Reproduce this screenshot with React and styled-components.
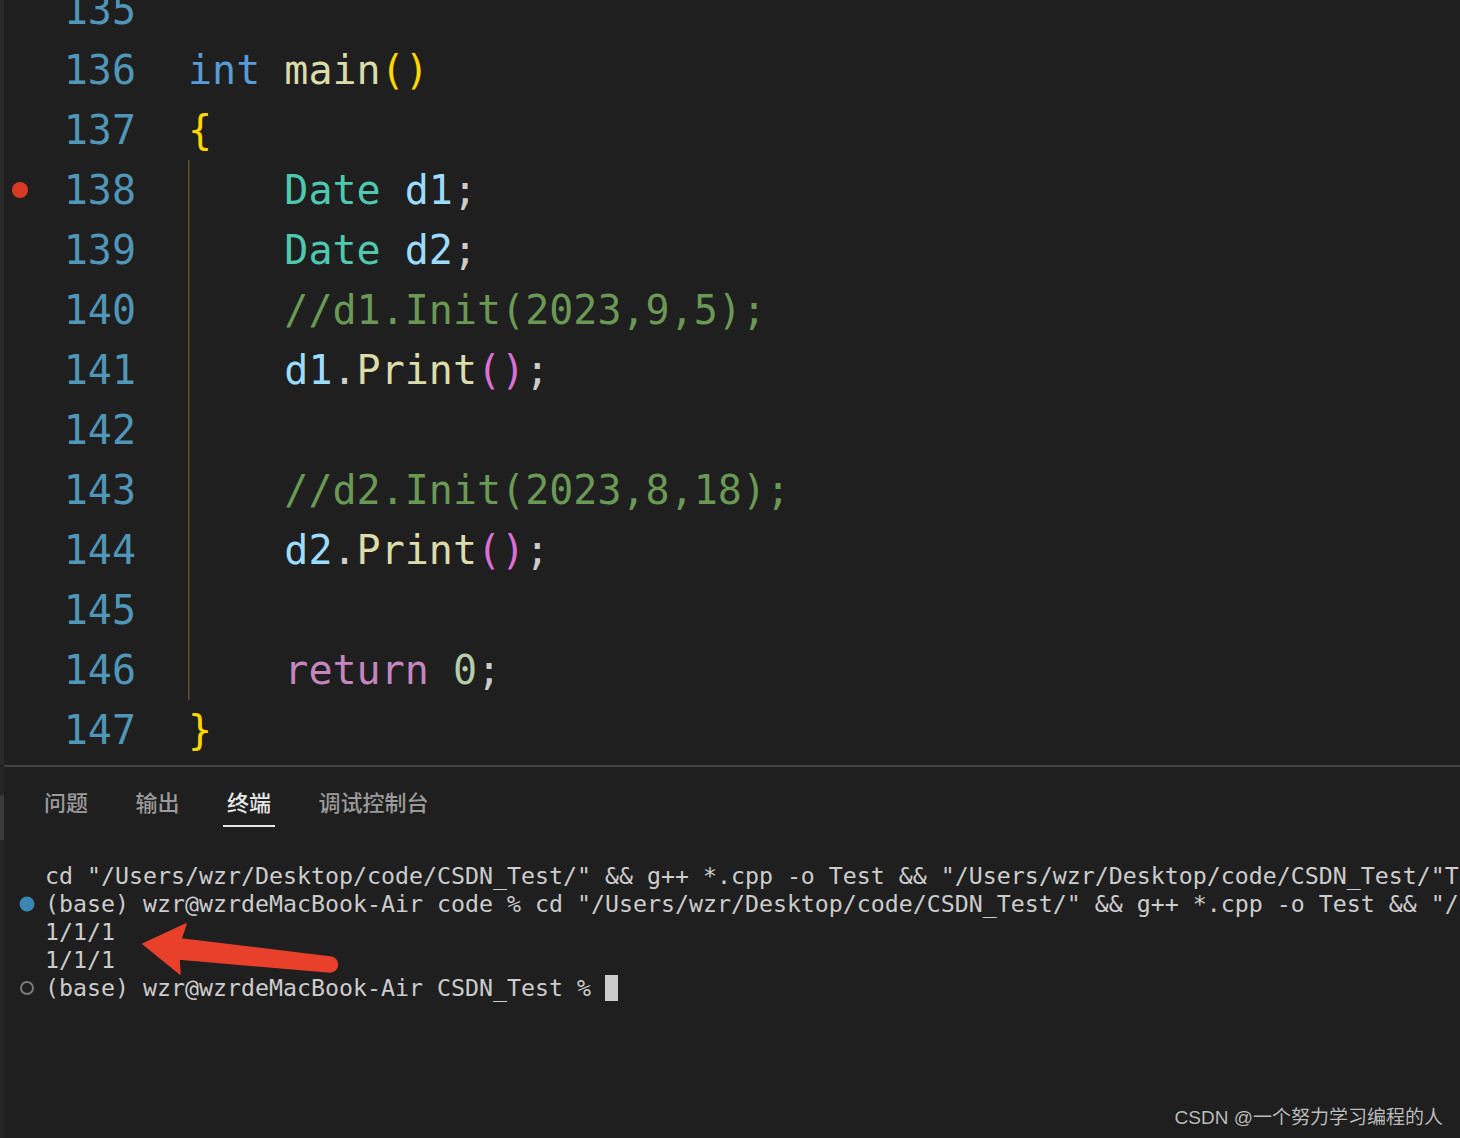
import React from "react";
import styled, { createGlobalStyle } from "styled-components";

const Global = createGlobalStyle`
  html, body { margin: 0; padding: 0; background: #1f1f1f; }
  body { width: 1460px; height: 1138px; overflow: hidden; }
`;

const MONO = `"DejaVu Sans Mono", "Liberation Mono", monospace`;
const CJK = `"Noto Sans CJK SC", "Noto Sans", sans-serif`;

const Window = styled.div`
  position: relative;
  width: 1460px;
  height: 1138px;
  background: #1f1f1f;
  display: flex;
  flex-direction: column;
  overflow: hidden;
`;

const Editor = styled.div`
  height: 765px;
  display: flex;
  overflow: hidden;
`;

const Edge = styled.div`
  width: 4px;
  flex: none;
  display: flex;
  flex-direction: column;
`;

const EdgePart = styled.div`
  height: ${(p) => (p.$h ? `${p.$h}px` : "auto")};
  flex: ${(p) => (p.$h ? "none" : "1")};
  background: ${(p) => p.$c};
`;

const Lines = styled.div`
  flex: 1;
  margin-top: -20px;
  display: flex;
  flex-direction: column;
`;

const Line = styled.div`
  display: flex;
  height: 60px;
  font-family: ${MONO};
  font-size: 40px;
  line-height: 60px;
  white-space: pre;
`;

const Glyph = styled.div`
  width: 32px;
  flex: none;
  display: flex;
  align-items: center;
  justify-content: center;
`;

const Num = styled.div`
  width: 100px;
  flex: none;
  text-align: right;
  color: #4f96b8;
`;

const Code = styled.div`
  margin-left: 52px;
  flex: 1;
  color: #cccccc;
  box-shadow: ${(p) => (p.$guide ? "inset 1.5px 0 0 #5c5230" : "none")};
`;

const T = styled.span`
  color: ${(p) => p.$c};
`;

const C = {
  kw: "#569cd6",
  fn: "#dcdcaa",
  br1: "#ffd700",
  br2: "#da70d6",
  type: "#4ec9b0",
  var: "#9cdcfe",
  punc: "#cccccc",
  com: "#6a9955",
  ctrl: "#c586c0",
  num: "#b5cea8",
};

const code = [
  { n: 135, t: [] },
  { n: 136, t: [["int", C.kw], [" "], ["main", C.fn], ["()", C.br1]] },
  { n: 137, t: [["{", C.br1]] },
  { n: 138, bp: true, g: true, t: [["    "], ["Date", C.type], [" "], ["d1", C.var], [";", C.punc]] },
  { n: 139, g: true, t: [["    "], ["Date", C.type], [" "], ["d2", C.var], [";", C.punc]] },
  { n: 140, g: true, t: [["    "], ["//d1.Init(2023,9,5);", C.com]] },
  { n: 141, g: true, t: [["    "], ["d1", C.var], [".", C.punc], ["Print", C.fn], ["()", C.br2], [";", C.punc]] },
  { n: 142, g: true, t: [] },
  { n: 143, g: true, t: [["    "], ["//d2.Init(2023,8,18);", C.com]] },
  { n: 144, g: true, t: [["    "], ["d2", C.var], [".", C.punc], ["Print", C.fn], ["()", C.br2], [";", C.punc]] },
  { n: 145, g: true, t: [] },
  { n: 146, g: true, t: [["    "], ["return", C.ctrl], [" "], ["0", C.num], [";", C.punc]] },
  { n: 147, t: [["}", C.br1]] },
];

const Main = styled.div`
  flex: 1;
  display: flex;
  flex-direction: column;
`;

const Panel = styled.div`
  flex: 1;
  display: flex;
`;

const Divider = styled.div`
  height: 2px;
  margin-left: 4px;
  background: #424242;
`;

const TabBar = styled.div`
  height: 73px;
  display: flex;
  align-items: flex-start;
  gap: 39.5px;
  padding: 20px 0 0 36px;
  box-sizing: border-box;
`;

const Tab = styled.div`
  padding: 0 4px 10px;
  font-family: ${CJK};
  font-size: 22px;
  font-weight: 500;
  line-height: 28px;
  color: ${(p) => (p.$active ? "#e7e7e7" : "#9a9a9a")};
  border-bottom: 2px solid ${(p) => (p.$active ? "#e7e7e7" : "transparent")};
`;

const Terminal = styled.div`
  padding-top: 22px;
  display: flex;
  flex-direction: column;
`;

const TermLine = styled.div`
  display: flex;
  align-items: center;
  height: 28px;
  font-family: ${MONO};
  font-size: 23.25px;
  line-height: 28px;
  color: #cccccc;
  white-space: pre;
`;

const Deco = styled.div`
  width: 41px;
  flex: none;
  display: flex;
  align-items: center;
  justify-content: center;
  padding-left: 4px;
  box-sizing: border-box;
`;

const Cursor = styled.span`
  display: inline-block;
  width: 13px;
  height: 26px;
  background: #cccccc;
  vertical-align: middle;
`;

const Arrow = styled.svg`
  position: absolute;
  left: 0;
  top: 0;
  pointer-events: none;
`;

const Watermark = styled.div`
  position: absolute;
  right: 17px;
  bottom: 8px;
  font-family: "Liberation Sans", "Noto Sans CJK SC", sans-serif;
  font-size: 19px;
  line-height: 24px;
  color: #bdbdbd;
  text-shadow: 0 0 1px rgba(0, 0, 0, 0.6);
`;

function BreakpointDot() {
  return (
    <svg width="18" height="18" viewBox="0 0 18 18">
      <circle cx="9" cy="9" r="8" fill="#d93a26" />
    </svg>
  );
}

function TermDot({ hollow }) {
  return (
    <svg width="16" height="16" viewBox="0 0 16 16">
      {hollow ? (
        <circle cx="8" cy="8" r="6" fill="none" stroke="#7a7a7a" strokeWidth="2" />
      ) : (
        <circle cx="8" cy="8" r="7.5" fill="#3a87b4" />
      )}
    </svg>
  );
}

const termLines = [
  { text: `cd "/Users/wzr/Desktop/code/CSDN_Test/" && g++ *.cpp -o Test && "/Users/wzr/Desktop/code/CSDN_Test/"Test` },
  { dot: "solid", text: `(base) wzr@wzrdeMacBook-Air code % cd "/Users/wzr/Desktop/code/CSDN_Test/" && g++ *.cpp -o Test && "/Users/wzr/Desktop/code/CSDN_Test/"Test` },
  { text: "1/1/1" },
  { text: "1/1/1" },
  { dot: "hollow", text: "(base) wzr@wzrdeMacBook-Air CSDN_Test % ", cursor: true },
];

export default function App() {
  return (
    <Window>
      <Global />
      <Editor>
        <Edge>
          <EdgePart $c="#2a2a2a" />
        </Edge>
        <Lines>
          {code.map((l) => (
            <Line key={l.n}>
              <Glyph>{l.bp && <BreakpointDot />}</Glyph>
              <Num>{l.n}</Num>
              <Code $guide={l.g}>
                {l.t.map(([s, c], i) => (
                  <T key={i} $c={c || "#cccccc"}>
                    {s}
                  </T>
                ))}
              </Code>
            </Line>
          ))}
        </Lines>
      </Editor>
      <Divider />
      <Panel>
        <Edge>
          <EdgePart $h={28} $c="#262626" />
          <EdgePart $h={45} $c="#3a3a3a" />
          <EdgePart $c="#262626" />
        </Edge>
        <Main>
          <TabBar>
            <Tab>问题</Tab>
            <Tab>输出</Tab>
            <Tab $active>终端</Tab>
            <Tab>调试控制台</Tab>
          </TabBar>
          <Terminal>
            {termLines.map((l, i) => (
              <TermLine key={i}>
                <Deco>{l.dot && <TermDot hollow={l.dot === "hollow"} />}</Deco>
                <span>{l.text}</span>
                {l.cursor && <Cursor />}
              </TermLine>
            ))}
          </Terminal>
        </Main>
      </Panel>
      <Arrow width="1460" height="1138" viewBox="0 0 1460 1138">
        <path
          d="M143,944 L186,924 L181,939 L330,957 A7.5,7.5 0 0 1 330,972 L179,959 L180,974 Z"
          fill="#e8402a"
          stroke="#e8402a"
          strokeWidth="1.5"
          strokeLinejoin="round"
        />
      </Arrow>
      <Watermark>CSDN @一个努力学习编程的人</Watermark>
    </Window>
  );
}
